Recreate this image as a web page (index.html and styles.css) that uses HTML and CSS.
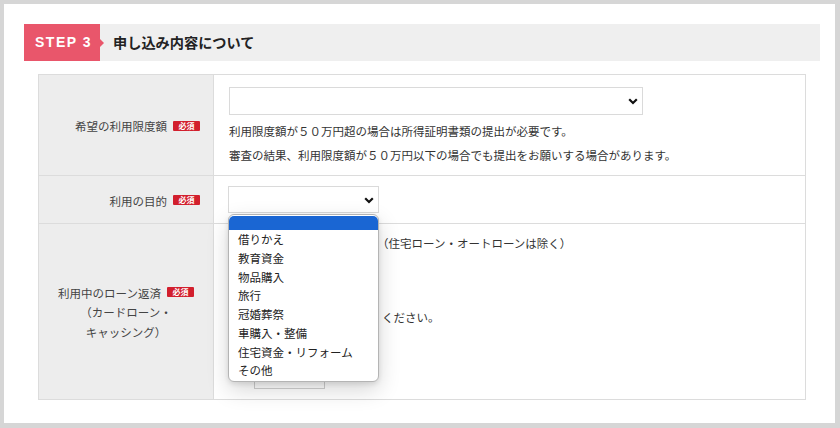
FILE: index.html
```html
<!DOCTYPE html>
<html lang="ja">
<head>
<meta charset="utf-8">
<title>STEP 3</title>
<link rel="stylesheet" href="styles.css">
</head>
<body>
<div class="card">
  <div class="step-bar">
    <div class="step-badge">STEP 3</div>
    <h2 class="step-title">申し込み内容について</h2>
  </div>
  <table class="form">
    <colgroup><col class="c-th"><col></colgroup>
    <tr class="r1">
      <th><span class="lbl">希望の利用限度額</span><span class="req">必須</span></th>
      <td>
        <div class="select w-lg">
          <svg class="chev" width="10" height="7" viewBox="0 0 10 7"><path d="M1.2 1.3 L5 5 L8.8 1.3" fill="none" stroke="#111" stroke-width="2.2"/></svg>
        </div>
        <p class="note">利用限度額が５０万円超の場合は所得証明書類の提出が必要です。</p>
        <p class="note">審査の結果、利用限度額が５０万円以下の場合でも提出をお願いする場合があります。</p>
      </td>
    </tr>
    <tr class="r2">
      <th><span class="lbl">利用の目的</span><span class="req">必須</span></th>
      <td>
        <div class="select-wrap">
          <div class="select w-sm">
            <svg class="chev" width="10" height="7" viewBox="0 0 10 7"><path d="M1.2 1.3 L5 5 L8.8 1.3" fill="none" stroke="#111" stroke-width="2.2"/></svg>
          </div>
          <ul class="dropdown">
            <li class="opt sel">&nbsp;</li>
            <li class="opt">借りかえ</li>
            <li class="opt">教育資金</li>
            <li class="opt">物品購入</li>
            <li class="opt">旅行</li>
            <li class="opt">冠婚葬祭</li>
            <li class="opt">車購入・整備</li>
            <li class="opt">住宅資金・リフォーム</li>
            <li class="opt">その他</li>
          </ul>
        </div>
      </td>
    </tr>
    <tr class="r3">
      <th class="center">
        <span class="line"><span class="lbl">利用中のローン返済</span><span class="req">必須</span></span>
        <span class="line">（カードローン・</span>
        <span class="line">キャッシング）</span>
      </th>
      <td>
        <p class="txt">（住宅ローン・オートローンは除く）</p>
        <div class="select w-sm hidden-sel"></div>
        <p class="txt t2">ください。</p>
        <div class="count-row">
          <span class="cnt-mark"></span>
          <div class="box"></div>
        </div>
      </td>
    </tr>
  </table>
</div>
</body>
</html>
```
FILE: styles.css
```css
html, body {
  margin: 0;
  padding: 0;
}
body {
  background: #d6d6d6;
  padding: 4px 5px 5px 4px;
  font-family: "Noto Sans CJK JP", "Noto Sans", sans-serif;
  color: #333;
}
.card {
  background: #fff;
  height: 419px;
  padding: 20px 15px 0 20px;
  box-sizing: border-box;
}
.step-bar {
  display: flex;
  align-items: center;
  height: 37px;
  background: #efefef;
}
.step-badge {
  position: relative;
  height: 37px;
  width: 76px;
  box-sizing: border-box;
  background: #e9566b;
  color: #fff;
  font-family: "Liberation Sans", Arial, sans-serif;
  font-weight: bold;
  font-size: 14px;
  letter-spacing: 1.5px;
  line-height: 37px;
  padding-left: 11px;
}
.step-badge::after {
  content: "";
  position: absolute;
  right: -4px;
  top: 15px;
  border-left: 4px solid #e9566b;
  border-top: 4px solid transparent;
  border-bottom: 4px solid transparent;
}
.step-title {
  margin: 0 0 0 13px;
  font-size: 14.2px;
  font-weight: bold;
  color: #222;
  line-height: 37px;
}
.form {
  margin: 13px 14px 0 14px;
  width: 768px;
  border-collapse: collapse;
  table-layout: fixed;
  font-size: 11.5px;
}
.c-th { width: 175px; }
.form th, .form td {
  border: 1px solid #dcdcdc;
  vertical-align: middle;
}
.form th {
  background: #ededed;
  color: #444;
  font-weight: normal;
  text-align: right;
  padding: 0 13px 0 0;
  white-space: nowrap;
}
.form th.center {
  text-align: center;
  padding: 0;
}
.form th .line {
  display: block;
  line-height: 20px;
}
.lbl { vertical-align: middle; }
.req {
  display: inline-block;
  vertical-align: middle;
  margin-left: 6px;
  width: 27px;
  height: 10px;
  background: #d21f2d;
  color: #fff;
  font-size: 8px;
  font-weight: bold;
  line-height: 10px;
  text-align: center;
  border-radius: 1px;
}
.form td {
  padding-left: 15px;
  padding-right: 15px;
}
.r1 td { padding-top: 12px; padding-bottom: 8px; }
.r2 td { padding-top: 10px; padding-bottom: 10px; }
.r3 td { padding-top: 9px; padding-bottom: 10px; }
.select {
  position: relative;
  box-sizing: border-box;
  border: 1px solid #dadada;
  background: #fff;
}
.w-lg { width: 414px; height: 28px; }
.w-sm { width: 151px; height: 27px; }
.chev {
  position: absolute;
  right: 4px;
  top: 10px;
}
.note {
  margin: 0;
  line-height: 24px;
  color: #333;
}
.note:first-of-type { margin-top: 4px; }
.select-wrap {
  position: relative;
  margin-left: -1px;
  width: 151px;
}
.dropdown {
  position: absolute;
  left: 0;
  top: 28px;
  width: 151px;
  box-sizing: border-box;
  margin: 0;
  padding: 1px 0 1px;
  list-style: none;
  background: #fff;
  border: 1px solid #b4b4b4;
  border-radius: 6px;
  box-shadow: 0 8px 22px rgba(0,0,0,0.16), 0 2px 5px rgba(0,0,0,0.10);
  z-index: 5;
}
.opt {
  height: 18.75px;
  line-height: 18.75px;
  padding-left: 9px;
  color: #222;
  font-size: 11.5px;
  white-space: nowrap;
}
.opt.sel {
  height: 14px;
  line-height: 14px;
  background: #1a66d3;
  border-radius: 5px 5px 0 0;
}
.txt {
  margin: 0;
  padding-left: 148px;
  line-height: 20px;
  color: #333;
  white-space: nowrap;
}
.hidden-sel { margin-top: 9px; margin-left: -1px; }
.t2 { margin-top: 18px; padding-left: 153px; }
.count-row {
  display: flex;
  align-items: flex-end;
  margin-top: 34px;
}
.cnt-mark {
  width: 25px;
  height: 10px;
}
.box {
  width: 71px;
  height: 28px;
  box-sizing: border-box;
  border: 1px solid #cfcfcf;
}
```
